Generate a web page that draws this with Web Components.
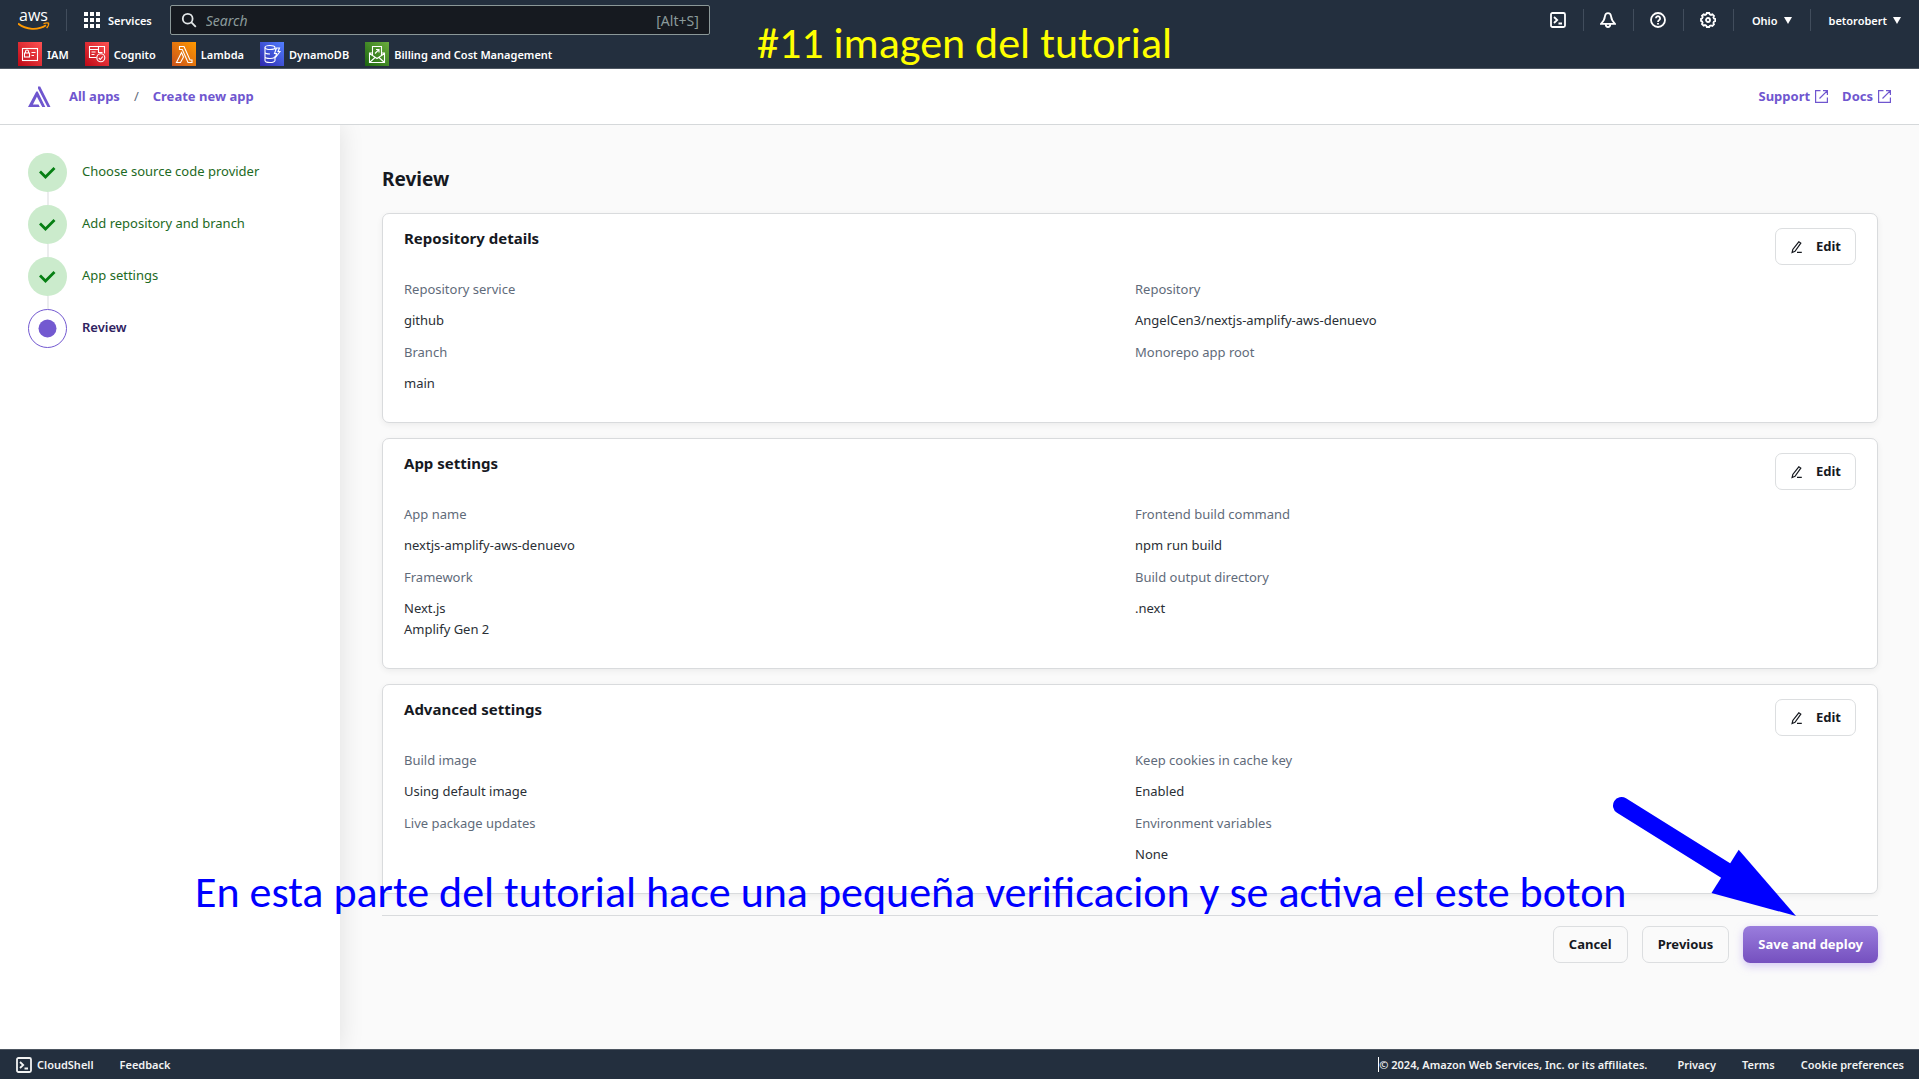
<!DOCTYPE html>
<html lang="en">
<head>
<meta charset="utf-8">
<title>Create new app</title>
<style>
  html, body { margin: 0; }
  body { font-family: "Noto Sans", "Open Sans", sans-serif; font-size: 13px; line-height: 21px; color: #16191f; background: #fafafa; }
</style>
</head>
<body>
<amplify-app></amplify-app>
<script>
const make = (name, html, setup) => {
  const tpl = document.createElement('template');
  tpl.innerHTML = '<style>*{box-sizing:border-box}svg{display:block;flex:none}button,input{font:inherit;color:inherit}</style>' + html;
  customElements.define(name, class extends HTMLElement {
    constructor() {
      super();
      this.attachShadow({ mode: 'open' }).appendChild(tpl.content.cloneNode(true));
    }
    connectedCallback() { if (setup) setup(this, this.shadowRoot); }
  });
};

const SHELL = '<rect x="1" y="1" width="14" height="14" rx="1.5"/><path d="M4 5l3.2 3L4 11M8.5 11.5H12"/>';
const ICONS = {
  shell: SHELL,
  bell: '<path d="M8 1.2c-1.800 0-2.800 1.200-3 3C4.600 7.500 3.500 9.500 1 11.800h14c-2.500-2.300-3.600-4.300-4-7.600-.2-1.800-1.200-3-3-3z"/><path d="M5.800 12v.8a2.200 2.200 0 0 0 4.400 0V12"/>',
  help: '<circle cx="8" cy="8" r="7"/><path d="M5.900 6.300a2.100 2.100 0 1 1 3.300 1.800c-.8.5-1.200.9-1.200 1.800M8 11v1.600"/>',
  gear: '<path d="M6.800 1h2.400l.5 1.300 1.300.6 1.400-.6 1.600 1.600-.6 1.400.5 1.300 1.300.4v2.200l-1.300.5-.5 1.300.6 1.400-1.600 1.600-1.400-.6-1.300.6L9.200 15H6.800l-.5-1.300-1.300-.6-1.400.6L2 12.100l.6-1.400-.5-1.300L1 8.900V6.800l1.200-.4.500-1.300L2 3.700l1.600-1.400 1.400.6 1.300-.6z"/><circle cx="8" cy="8" r="2"/>'
};
const FAV = {
  iam: ['#bd0816', '#ff5252', '<rect x="4.500" y="6.500" width="15" height="12"/><rect x="6.500" y="11" width="5" height="4"/><path d="M7.500 11V9.500a1.500 1.500 0 0 1 3 0V11M13.500 10.500h4M13.500 13.500h2.500"/>'],
  cognito: ['#bd0816', '#ff5252', '<path d="M11.500 15.500h-7v-11h15v7M4.500 7.500h9M6.500 10h4M6.500 12.500h3M13.500 4.500v6h4"/><circle cx="15.800" cy="15.800" r="4"/><path d="M13.800 16l1.500 1.500 2.500-3"/>'],
  lambda: ['#c8511b', '#ff9900', '<path d="M7.500 4.500h4.500l6 13.500h2v2.500h-4L10.300 7.500H7.500zM9.500 10.500l2 4.500-3 5.500H4.500z"/>'],
  dynamo: ['#2e27ad', '#527fff', '<ellipse cx="10" cy="5.500" rx="5" ry="2"/><path d="M5 5.500v13c0 1.200 2.200 2 5 2s5-.8 5-2V14M5 10c0 1.200 2.200 2 5 2M5 14.500c0 1.200 2.200 2 5 2s4-.6 4.500-1M15 5.500v2M16.500 6h3l-1.500 3.500h2l-4.500 6 1-4h-2z"/>'],
  billing: ['#1b660f', '#6cae3e', '<path d="M7.500 13V4.500h9V13M7.500 11h-3v9.500h15V11h-3M4.500 11.500l7.500 5 7.500-5M4.500 20.500l5.500-5M19.500 20.500l-5.500-5M10 11.500l4-4M11 7.500h3v3"/>']
};

/* Square service shortcut in the console favourites bar */
make('fav-link', `<style>
  :host { display: block; }
  a { display: flex; align-items: center; gap: 5px; color: #fff; text-decoration: none; font-size: 11px; font-weight: 600; white-space: nowrap; }
  </style><a href="#"><svg width="24" height="24" viewBox="0 0 24 24"><defs><linearGradient id="g" x1="0" y1="1" x2="1" y2="0"><stop offset="0"/><stop offset="1"/></linearGradient></defs><rect width="24" height="24" fill="url(#g)"/><g fill="none" stroke="#fff" stroke-width="1.100"></g></svg><slot></slot></a>`,
  (el, root) => {
    const [a, b, d] = FAV[el.getAttribute('icon')];
    const s = root.querySelectorAll('stop');
    s[0].setAttribute('stop-color', a); s[1].setAttribute('stop-color', b);
    root.querySelector('g').innerHTML = d;
  });

make('tool-button', `<style>
  :host { display: flex; align-items: center; height: 22px; border-left: 1px solid #414d5c; }
  :host([first]) { border-left: 0; }
  button { display: flex; align-items: center; justify-content: center; width: 49px; height: 22px; padding: 0; border: 0; background: none; color: #fff; }
  </style><button type="button"><svg width="16" height="16" viewBox="0 0 16 16" fill="none" stroke="currentColor" stroke-width="1.800"></svg></button>`,
  (el, root) => {
    const name = el.getAttribute('icon');
    root.querySelector('svg').innerHTML = ICONS[name];
    root.querySelector('button').setAttribute('aria-label', name);
  });

make('menu-button', `<style>
  :host { display: flex; align-items: center; height: 22px; border-left: 1px solid #414d5c; }
  button { display: flex; align-items: center; gap: 6px; padding: 0 18px; border: 0; background: none; color: #fff; font-size: 11px; font-weight: 600; }
  </style><button type="button"><slot></slot><svg width="8" height="7" viewBox="0 0 8 7"><path d="M0 0h8L4 7z" fill="#fff"/></svg></button>`);

make('console-header', `<style>
  :host { display: block; background: #232f3e; color: #fff; border-bottom: 1px solid #4d5661; }
  .top { display: flex; align-items: center; height: 40px; padding-left: 18px; }
  .logo { display: flex; align-items: center; height: 22px; padding-right: 16px; border-right: 1px solid #414d5c; }
  .services { display: flex; align-items: center; gap: 8px; padding: 0 18px 0 17px; border: 0; background: none; font-size: 11px; font-weight: 600; }
  .search { display: flex; align-items: center; width: 540px; height: 30px; padding: 0 10px; gap: 9px; background: #161a20; border: 1px solid #8b9898; border-radius: 2px; color: #8b9a9b; font-size: 14px; }
  input { flex: 1; min-width: 0; padding: 0; border: 0; outline: 0; background: none; }
  input::placeholder { color: #8b9a9b; font-style: italic; opacity: 1; }
  .tools { display: flex; align-items: center; margin-left: auto; }
  nav { display: flex; gap: 16px; align-items: center; height: 28px; padding-left: 18px; }
  </style>
  <div class="top">
    <a class="logo" href="#" aria-label="AWS home"><svg width="32" height="32" viewBox="0 0 32 32"><text x="1" y="17" font-size="16" font-weight="500" font-family="Open Sans, sans-serif" fill="#fff">aws</text><path d="M0 19.500c8 6.500 20 7 28 1.700" fill="none" stroke="#ff9900" stroke-width="1.800"/><path d="M25.500 19.700c2-.8 4-.9 5-.5.400 1-.5 3.500-1.900 4.800" fill="none" stroke="#ff9900" stroke-width="1.400"/></svg></a>
    <button class="services" type="button"><svg width="16" height="16" viewBox="0 0 16 16" fill="#fff"><path d="M0 0h4v4H0zM6 0h4v4H6zM12 0h4v4h-4zM0 6h4v4H0zM6 6h4v4H6zM12 6h4v4h-4zM0 12h4v4H0zM6 12h4v4H6zM12 12h4v4h-4z"/></svg>Services</button>
    <label class="search"><svg width="16" height="16" viewBox="0 0 16 16" fill="none" stroke="#e3e7e8" stroke-width="1.800"><circle cx="6.700" cy="6.700" r="4.900"/><path d="M10.200 10.200l4.600 4.600"/></svg><input type="text" placeholder="Search" aria-label="Search"><span>[Alt+S]</span></label>
    <div class="tools">
      <tool-button icon="shell" first></tool-button><tool-button icon="bell"></tool-button><tool-button icon="help"></tool-button><tool-button icon="gear"></tool-button>
      <menu-button>Ohio</menu-button><menu-button>betorobert</menu-button>
    </div>
  </div>
  <nav><fav-link icon="iam">IAM</fav-link><fav-link icon="cognito">Cognito</fav-link><fav-link icon="lambda">Lambda</fav-link><fav-link icon="dynamo">DynamoDB</fav-link><fav-link icon="billing">Billing and Cost Management</fav-link></nav>`);

make('crumb-bar', `<style>
  :host { display: flex; align-items: center; height: 56px; padding: 0 28px; background: #fff; border-bottom: 1px solid #d5d8da; font-weight: 700; }
  a { display: flex; align-items: center; gap: 5px; color: #6f56cf; text-decoration: none; }
  nav { display: flex; gap: 14px; margin-left: 18px; color: #5f6b7a; font-weight: 400; }
  nav a { font-weight: 700; }
  .links { display: flex; gap: 14px; margin-left: auto; }
  </style>
  <svg width="23" height="22" viewBox="0 0 23 22" fill="#6f56cf"><path d="M9.700 5.500L17.300 21h-3L8.900 10.800 4.900 18.600h5.600l1.300 2.400H0L8.300 5.500zM10 .5h2.200L22.500 21h-3L10 2.500z"/></svg>
  <nav><a href="#">All apps</a><span>/</span><a href="#">Create new app</a></nav>
  <div class="links">
    <a href="#">Support<svg width="13" height="13" viewBox="0 0 13 13" fill="none" stroke="currentColor" stroke-width="1.200"><path d="M5.500 .6H.6v11.800h11.800V7.500M8 .6h4.400V5M12.400 .6L4.500 8.500"/></svg></a>
    <a href="#">Docs<svg width="13" height="13" viewBox="0 0 13 13" fill="none" stroke="currentColor" stroke-width="1.200"><path d="M5.500 .6H.6v11.800h11.800V7.500M8 .6h4.400V5M12.400 .6L4.500 8.500"/></svg></a>
  </div>`);

make('wizard-step', `<style>
  :host { display: flex; gap: 15px; color: #1d6a24; }
  :host([current]) { color: #2f2261; font-weight: 600; }
  .mark { display: flex; flex-direction: column; align-items: center; }
  .line { width: 2px; height: 13px; background: #ecedee; }
  :host([current]) .line, :host([current]) .done, :host(:not([current])) .now { display: none; }
  .label { padding-top: 8px; }
  </style>
  <div class="mark">
    <svg class="done" width="39" height="39" viewBox="0 0 39 39"><circle cx="19.500" cy="19.500" r="19.500" fill="#cbebcc"/><path d="M12 18.500l5.500 5.500 9-9" fill="none" stroke="#067f13" stroke-width="2.800"/></svg>
    <svg class="now" width="39" height="39" viewBox="0 0 39 39"><circle cx="19.500" cy="19.500" r="19" fill="#fff" stroke="#7359d0"/><circle cx="19.500" cy="19.500" r="9" fill="#7359d0"/></svg>
    <div class="line"></div>
  </div>
  <div class="label"><slot></slot></div>`);

make('app-button', `<style>
  :host { display: block; }
  button { display: flex; align-items: center; height: 37px; padding: 0 15px; gap: 12px; border: 1px solid #dcdee0; border-radius: 7px; background: transparent; color: #16191f; font-weight: 700; white-space: nowrap; }
  :host([primary]) button { border: 0; color: #fff; background: linear-gradient(#9a7ddd, #7550bf); box-shadow: 0 3px 8px #b9a5f099; }
  :host([edit]) button { padding: 0 14px; }
  svg { display: none; }
  :host([edit]) svg { display: block; }
  </style><button type="button"><svg width="14" height="14" viewBox="0 0 14 14" fill="none" stroke="#16191f" stroke-width="1.200"><path d="M8.800 1.800l2 1.300-5.800 8.200-2.900 1.200.7-3zM7 12.400h4.800"/></svg><slot></slot></button>`);

make('detail-item', `<style>
  :host { display: flex; flex-direction: column; gap: 10px; }
  .label { color: #5f6b7a; }
  .value { color: #2a2f36; min-height: 21px; }
  </style><div class="label"></div><div class="value"><slot></slot></div>`,
  (el, root) => { root.querySelector('.label').textContent = el.getAttribute('label'); });

make('review-card', `<style>
  :host { display: block; padding: 14px 21px 28px; background: #fff; border: 1px solid #d9dbdd; border-radius: 7px; box-shadow: 0 2px 6px #0000000f; }
  header { display: flex; justify-content: space-between; align-items: flex-start; margin-bottom: 14px; }
  h2 { margin: 0; font-size: 15px; line-height: 21px; font-weight: 700; }
  .grid { display: grid; grid-template-columns: 1fr 1fr; gap: 11px 10px; }
  </style><header><h2></h2><app-button edit>Edit</app-button></header><div class="grid"><slot></slot></div>`,
  (el, root) => { root.querySelector('h2').textContent = el.getAttribute('heading'); });

make('console-footer', `<style>
  :host { display: flex; align-items: center; height: 30px; padding: 0 15px 0 16px; background: #232f3e; border-top: 1px solid #4d5661; font-size: 11px; font-weight: 600; color: #f2f3f3; }
  a { display: flex; align-items: center; gap: 5px; color: inherit; text-decoration: none; }
  .left, .right { display: flex; gap: 26px; }
  .right { margin-left: auto; }
  .copy { border-left: 1px solid #fff; line-height: 15px; margin: 3px 4px 3px 0; }
  </style>
  <div class="left"><a href="#"><svg width="16" height="16" viewBox="0 0 16 16" fill="none" stroke="currentColor" stroke-width="1.800">${SHELL}</svg>CloudShell</a><a href="#">Feedback</a></div>
  <div class="right"><span class="copy">© 2024, Amazon Web Services, Inc. or its affiliates.</span><a href="#">Privacy</a><a href="#">Terms</a><a href="#">Cookie preferences</a></div>`);

/* Free notes and the pointer drawn over the page */
make('tutorial-notes', `<style>
  :host { position: absolute; inset: 0; pointer-events: none; font-family: Carlito, Calibri, "Open Sans", sans-serif; font-size: 44px; line-height: 50px; white-space: nowrap; overflow: hidden; }
  p { position: absolute; margin: 0; }
  .title { left: 757px; top: 18px; color: #ff0; }
  .note { left: 195px; top: 867px; color: #00f; }
  svg { position: absolute; right: 122px; top: 796px; }
  </style>
  <p class="title">#11 imagen del tutorial</p>
  <p class="note">En esta parte del tutorial hace una pequeña verificacion y se activa el este boton</p>
  <svg width="185" height="122" viewBox="0 0 185 122"><path d="M9.500 9.500L116 76" stroke="#00f" stroke-width="17" stroke-linecap="round"/><path d="M126.700 53.700L184 120 99.500 97z" fill="#00f"/></svg>`);

make('amplify-app', `<style>
  :host { position: relative; display: flex; flex-direction: column; min-height: 100vh; }
  .body { display: flex; flex: 1; }
  aside { width: 340px; flex: none; padding: 28px; background: #fff; box-shadow: 0 0 24px #0000001c; clip-path: inset(0 -30px 0 0); }
  main { flex: 1; min-width: 0; padding: 43px 41px 0 42px; }
  h1 { margin: 0 0 23px; font-size: 19px; line-height: 22px; font-weight: 700; }
  .cards { display: flex; flex-direction: column; gap: 15px; }
  .actions { display: flex; justify-content: flex-end; gap: 14px; margin-top: 21px; padding-top: 10px; border-top: 1px solid #d9dbdd; }
  </style>
  <console-header></console-header>
  <crumb-bar></crumb-bar>
  <div class="body">
    <aside><wizard-step>Choose source code provider</wizard-step><wizard-step>Add repository and branch</wizard-step><wizard-step>App settings</wizard-step><wizard-step current>Review</wizard-step></aside>
    <main>
      <h1>Review</h1>
      <div class="cards">
        <review-card heading="Repository details">
          <detail-item label="Repository service">github</detail-item><detail-item label="Repository">AngelCen3/nextjs-amplify-aws-denuevo</detail-item>
          <detail-item label="Branch">main</detail-item><detail-item label="Monorepo app root"></detail-item>
        </review-card>
        <review-card heading="App settings">
          <detail-item label="App name">nextjs-amplify-aws-denuevo</detail-item><detail-item label="Frontend build command">npm run build</detail-item>
          <detail-item label="Framework">Next.js<br>Amplify Gen 2</detail-item><detail-item label="Build output directory">.next</detail-item>
        </review-card>
        <review-card heading="Advanced settings">
          <detail-item label="Build image">Using default image</detail-item><detail-item label="Keep cookies in cache key">Enabled</detail-item>
          <detail-item label="Live package updates"></detail-item><detail-item label="Environment variables">None</detail-item>
        </review-card>
      </div>
      <div class="actions"><app-button>Cancel</app-button><app-button>Previous</app-button><app-button primary>Save and deploy</app-button></div>
    </main>
  </div>
  <console-footer></console-footer>
  <tutorial-notes></tutorial-notes>`);
</script>
</body>
</html>
